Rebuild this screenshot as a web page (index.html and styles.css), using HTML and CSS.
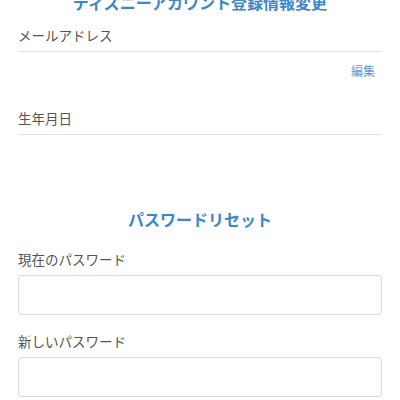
FILE: index.html
```html
<!DOCTYPE html>
<html lang="ja">
<head>
  <meta charset="UTF-8" />
  <meta name="viewport" content="width=device-width, initial-scale=1.0"/>
  <title>アカウント設定</title>
  <link rel="stylesheet" href="styles.css">
</head>
<body>
  <section class="profile">
    <h2 class="section-title">ディズニーアカウント登録情報変更</h2>
    <div class="info-row">メールアドレス</div>
    <div class="edit-row"><a href="#" class="edit-link">編集</a></div>
    <div class="info-row birth">生年月日</div>
  </section>

  <section class="password">
    <h2 class="section-title">パスワードリセット</h2>
    <div class="form-group">
      <label for="currentPw">現在のパスワード</label>
      <input type="password" id="currentPw" />
    </div>
    <div class="form-group">
      <label for="newPw">新しいパスワード</label>
      <input type="password" id="newPw" />
    </div>
  </section>
</body>
</html>
```

FILE: styles.css
```css
body {
  font-family: "Noto Sans CJK JP", "Noto Sans", sans-serif;
  margin: 0;
  padding: 0 18px;
  background: #fff;
  color: #555;
}
.section-title {
  font-size: 16px;
  line-height: 24px;
  font-weight: bold;
  color: #3d87c8;
  text-align: center;
  margin: 0;
}
.profile .section-title {
  margin-top: -10px;
  margin-bottom: 11px;
}
.info-row {
  font-size: 13.5px;
  line-height: 20px;
  padding-bottom: 6px;
  border-bottom: 1px solid #e2e2ea;
}
.info-row.birth {
  margin-top: 28px;
}
.edit-row {
  margin-top: 10px;
  text-align: right;
  padding-right: 7px;
  font-size: 12px;
  line-height: 18px;
}
.edit-link {
  color: #5f9bd2;
  text-decoration: none;
}
.password {
  margin-top: 72px;
}
.password .section-title {
  margin-bottom: 18px;
}
.form-group {
  display: flex;
  flex-direction: column;
  gap: 6px;
  margin-bottom: 16px;
}
.form-group label {
  font-size: 13.5px;
  line-height: 20px;
}
.form-group input {
  box-sizing: border-box;
  height: 40px;
  border: 1px solid #d9d9e1;
  border-radius: 4px;
  padding: 0 10px;
  font-size: 14px;
  margin: 0;
}
```
